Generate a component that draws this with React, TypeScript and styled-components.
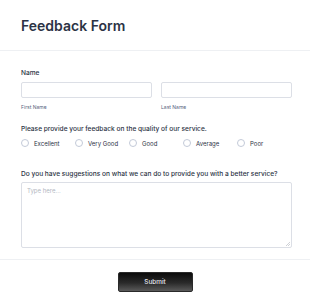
import styled, {createGlobalStyle} from "styled-components";

const GlobalStyle = createGlobalStyle`
    html, body {
        margin: 0;
        padding: 0;
        background: #ffffff;
    }
    body {
        font-family: Inter, "Noto Sans", sans-serif;
        color: #2c3345;
    }
`;

const Page = styled.div`
    width: 310px;
    height: 308px;
    display: flex;
    flex-direction: column;
    overflow: hidden;
`;

const Header = styled.header`
    height: 50px;
    display: flex;
    align-items: center;
    padding: 0 21px;
    border-bottom: 1px solid #eef0f3;
`;

const Title = styled.h1`
    margin: 0;
    font-size: 14px;
    font-weight: 600;
    color: #2c3345;
`;

const Body = styled.div`
    padding: 18px 18px 0 21px;
    display: flex;
    flex-direction: column;
`;

const Label = styled.div<{ $gap?: number }>`
    font-size: 6.6px;
    line-height: 8px;
    font-weight: 500;
    color: #2c3345;
    margin-bottom: ${p => p.$gap ?? 5}px;
`;

const NameRow = styled.div`
    display: grid;
    grid-template-columns: 1fr 1fr;
    gap: 9px;
`;

const Field = styled.div`
    display: flex;
    flex-direction: column;
`;

const Input = styled.div`
    height: 14px;
    border: 1px solid #dcdfe6;
    border-radius: 2px;
    background: #fff;
`;

const SubLabel = styled.span`
    font-size: 5px;
    line-height: 6px;
    color: #57647e;
    margin-top: 6px;
`;

const Section = styled.div<{ $top: number }>`
    margin-top: ${p => p.$top}px;
`;

const RadioRow = styled.div`
    display: grid;
    grid-template-columns: repeat(5, 54px);
`;

const RadioItem = styled.label`
    display: flex;
    align-items: center;
    gap: 5px;
    height: 8px;
    font-size: 6px;
    color: #2c3345;
`;

const Circle = styled.span`
    width: 8px;
    height: 8px;
    border-radius: 50%;
    border: 1px solid #c3cad8;
    box-sizing: border-box;
`;

const TextArea = styled.div`
    position: relative;
    height: 66px;
    border: 1px solid #dcdfe6;
    border-radius: 2px;
    padding: 4px 5px;
    box-sizing: border-box;
    font-size: 6px;
    color: #b2b7c2;
`;

const Grip = styled.svg`
    position: absolute;
    right: 1px;
    bottom: 1px;
`;

const Footer = styled.div`
    margin-top: 11px;
    border-top: 1px solid #eef0f3;
    display: flex;
    justify-content: center;
    padding-top: 12px;
`;

const SubmitButton = styled.button`
    width: 75px;
    height: 20px;
    border: 1px solid #2a2a2a;
    border-radius: 2px;
    background: linear-gradient(180deg, #0b0b0b 0%, #2a2a2a 55%, #5a5a5a 100%);
    color: #e6e9f2;
    font-family: Inter, "Noto Sans", sans-serif;
    font-size: 6.4px;
    font-weight: 500;
    padding: 0;
`;

const options = ["Excellent", "Very Good", "Good", "Average", "Poor"];

function App() {
    return (
        <>
            <GlobalStyle/>
            <Page>
                <Header>
                    <Title>Feedback Form</Title>
                </Header>
                <Body>
                    <Label>Name</Label>
                    <NameRow>
                        <Field>
                            <Input/>
                            <SubLabel>First Name</SubLabel>
                        </Field>
                        <Field>
                            <Input/>
                            <SubLabel>Last Name</SubLabel>
                        </Field>
                    </NameRow>

                    <Section $top={15}>
                        <Label $gap={6}>Please provide your feedback on the quality of our service.</Label>
                        <RadioRow>
                            {options.map(o => (
                                <RadioItem key={o}>
                                    <Circle/>
                                    {o}
                                </RadioItem>
                            ))}
                        </RadioRow>
                    </Section>

                    <Section $top={23}>
                        <Label $gap={4}>Do you have suggestions on what we can do to provide you with a better service?</Label>
                        <TextArea>
                            Type here...
                            <Grip width="4" height="4" viewBox="0 0 4 4">
                                <path d="M4 0 L0 4 M4 2 L2 4" stroke="#b0b4bc" strokeWidth="0.6"/>
                            </Grip>
                        </TextArea>
                    </Section>
                </Body>
                <Footer>
                    <SubmitButton>Submit</SubmitButton>
                </Footer>
            </Page>
        </>
    )
}

export default App
